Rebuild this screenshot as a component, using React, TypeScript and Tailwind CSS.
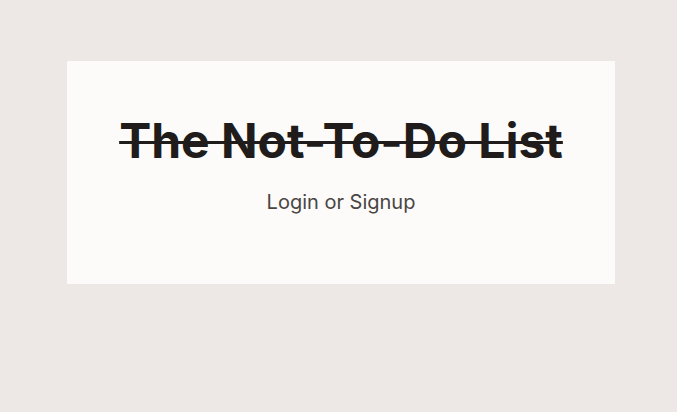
export default function App() {
  return (
    <div className="min-h-[412px] w-full bg-[#ede7e6] pt-[61px] pl-[67px]" style={{ fontFamily: "Inter, 'Liberation Sans', sans-serif" }}>
      <div className="w-[548px] h-[223px] bg-[#fcfbfa] flex flex-col items-center pt-[52px]">
        <h1 className="text-[48px] leading-[56px] font-bold text-[#201c1b] line-through decoration-[3px] tracking-[0px]">The Not-To-Do List</h1>
        <p className="mt-[21px] text-[20px] leading-[24px] text-[#4a4543]">Login or Signup</p>
      </div>
    </div>
  );
}
